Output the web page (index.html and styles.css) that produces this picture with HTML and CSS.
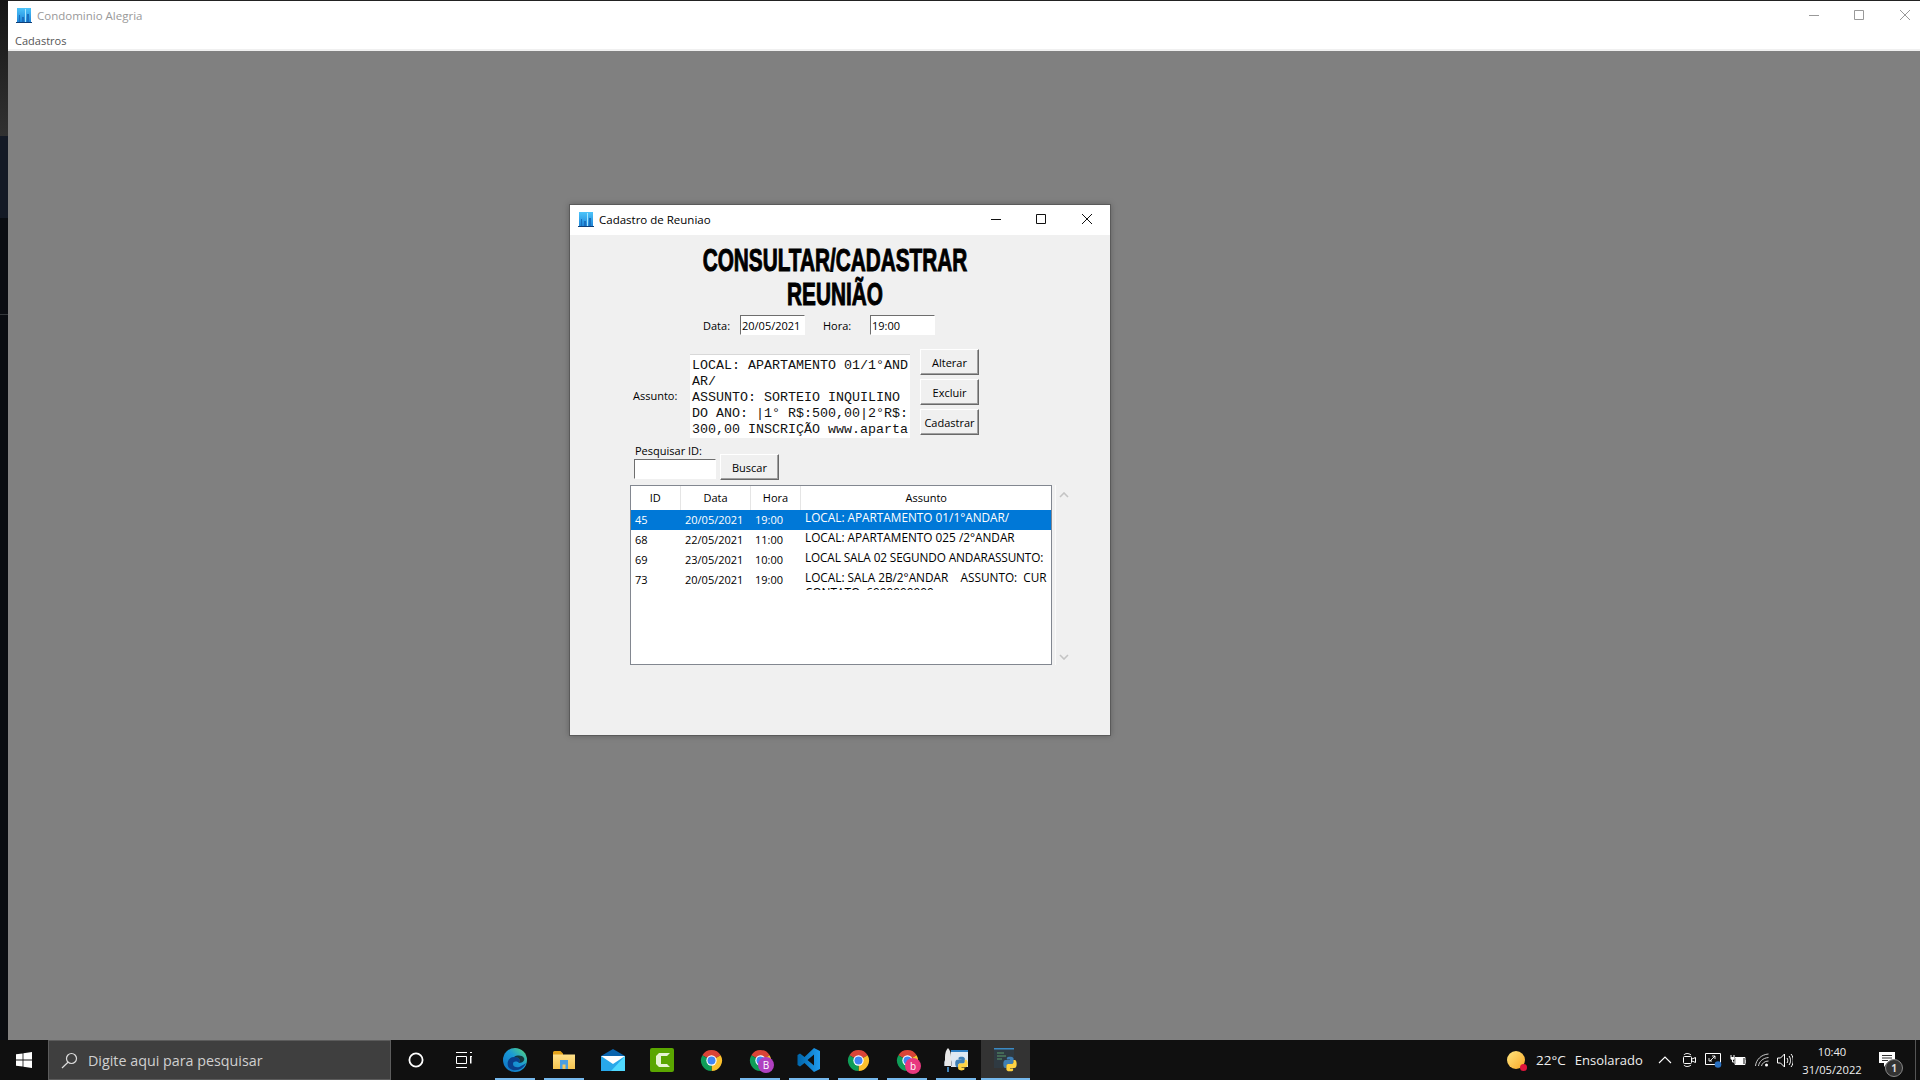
FILE: index.html
```html
<!DOCTYPE html>
<html lang="pt-BR">
<head>
  <meta charset="UTF-8">
  <title>Condominio Alegria</title>
  <link rel="stylesheet" href="styles.css">
</head>
<body>
  <svg class="defs" width="0" height="0">
    <defs>
      <linearGradient id="bldg-fill" x1="0" y1="0" x2="0" y2="1"><stop offset="0" stop-color="#4cc4fa"/><stop offset="1" stop-color="#1f86d8"/></linearGradient>
      <linearGradient id="edge-fill" x1="0" y1="1" x2="1" y2="0"><stop offset="0" stop-color="#0d6fc4"/><stop offset=".55" stop-color="#1a9ad6"/><stop offset="1" stop-color="#5bdc72"/></linearGradient>
      <linearGradient id="folder-fill" x1="0" y1="0" x2="0" y2="1"><stop offset="0" stop-color="#ffe08a"/><stop offset="1" stop-color="#f5c34e"/></linearGradient>
      <linearGradient id="vs-fill" x1="0" y1="0" x2="1" y2="0"><stop offset="0" stop-color="#0065a9"/><stop offset="1" stop-color="#1f9cf0"/></linearGradient>
      <symbol id="bldg" viewBox="0 0 16 16">
        <path fill="url(#bldg-fill)" d="M1 1h14v14H1z"/>
        <path fill="#1a6fbe" d="M3 8h1v7H3zM6 10h2v5H6zM11 7h2v8h-2z"/>
        <path fill="#a8e6ff" d="M9 2h1v13H9z"/>
        <path fill="#0e3f78" d="M0 15h16v1H0z"/>
      </symbol>
      <symbol id="chrome" viewBox="0 0 24 24">
        <path fill="#db4437" d="M12 12L2.47 6.5A11 11 0 0 1 21.53 6.5z"/>
        <path fill="#fbc02d" d="M12 12l9.53-5.5A11 11 0 0 1 12 23z"/>
        <path fill="#0f9d58" d="M12 12v11A11 11 0 0 1 2.47 6.5z"/>
        <circle cx="12" cy="12" r="5.4" fill="#fff"/>
        <circle cx="12" cy="12" r="4.2" fill="#4285f4"/>
      </symbol>
      <symbol id="python" viewBox="0 0 24 24">
        <path fill="#3f7fb5" d="M11.9 1C7 1 7.3 3.1 7.3 3.1v2.3H12V6H5.4S2 5.7 2 11.9c0 6.2 3 6 3 6h1.8v-2.9s-.1-3 2.9-3h4.9s2.8 0 2.8-2.7V3.9S17.1 1 11.9 1z"/>
        <path fill="#ffd343" d="M12.1 23c4.9 0 4.6-2.1 4.6-2.1v-2.3H12V18h6.6s3.4.3 3.4-5.9c0-6.2-3-6-3-6h-1.8V9s.1 3-2.9 3H9.4s-2.8 0-2.8 2.7v5.4S6.9 23 12.1 23z"/>
      </symbol>
    </defs>
  </svg>

  <div class="screen">
    <div class="edge-strip">
      <div class="strip-a"></div>
      <div class="strip-b"></div>
      <div class="strip-c"></div>
      <div class="strip-d"></div>
    </div>

    <div class="main-win">
      <div class="titlebar main-title">
        <svg class="app-icon"><use href="#bldg"/></svg>
        <span class="win-title">Condominio Alegria</span>
        <div class="win-btns">
          <svg width="10" height="10" viewBox="0 0 10 10"><path d="M0 5.5h10" stroke="#999"/></svg>
          <svg width="10" height="10" viewBox="0 0 10 10"><path d="M.5.5h9v9h-9z" fill="none" stroke="#999"/></svg>
          <svg width="10" height="10" viewBox="0 0 10 10"><path d="M0 0l10 10M10 0L0 10" stroke="#999"/></svg>
        </div>
      </div>
      <div class="menubar"><span>Cadastros</span></div>

      <div class="mdi">
        <div class="dialog">
          <div class="titlebar dlg-title">
            <svg class="app-icon"><use href="#bldg"/></svg>
            <span class="win-title">Cadastro de Reuniao</span>
            <div class="win-btns">
              <svg width="10" height="10" viewBox="0 0 10 10"><path d="M0 5.5h10" stroke="#111"/></svg>
              <svg width="10" height="10" viewBox="0 0 10 10"><path d="M.5.5h9v9h-9z" fill="none" stroke="#111"/></svg>
              <svg width="10" height="10" viewBox="0 0 10 10"><path d="M0 0l10 10M10 0L0 10" stroke="#111"/></svg>
            </div>
          </div>

          <div class="dlg-body">
            <h1 class="heading"><span>CONSULTAR/CADASTRAR</span><span>REUNIÃO</span></h1>

            <div class="row-when">
              <label class="lbl-data">Data:</label>
              <input class="field" type="text" value="20/05/2021">
              <label class="lbl-hora">Hora:</label>
              <input class="field" type="text" value="19:00">
            </div>

            <div class="row-subject">
              <label class="lbl-subject">Assunto:</label>
              <textarea class="memo" readonly>LOCAL: APARTAMENTO 01/1°AND
AR/
ASSUNTO: SORTEIO INQUILINO
DO ANO: |1° R$:500,00|2°R$:
300,00 INSCRIÇÃO www.aparta</textarea>
              <div class="actions">
                <button class="btn">Alterar</button>
                <button class="btn">Excluir</button>
                <button class="btn">Cadastrar</button>
              </div>
            </div>

            <div class="row-search">
              <div class="search-col">
                <label class="lbl-search">Pesquisar ID:</label>
                <input class="field field-id" type="text">
              </div>
              <button class="btn">Buscar</button>
            </div>

            <div class="row-list">
              <div class="list">
                <table>
                  <colgroup><col class="c-id"><col class="c-data"><col class="c-hora"><col></colgroup>
                  <thead><tr><th>ID</th><th>Data</th><th>Hora</th><th>Assunto</th></tr></thead>
                  <tbody>
                    <tr class="sel"><td>45</td><td>20/05/2021</td><td>19:00</td><td><div class="subj">LOCAL: APARTAMENTO 01/1°ANDAR/</div></td></tr>
                    <tr><td>68</td><td>22/05/2021</td><td>11:00</td><td><div class="subj">LOCAL: APARTAMENTO 025 /2°ANDAR</div></td></tr>
                    <tr><td>69</td><td>23/05/2021</td><td>10:00</td><td><div class="subj tight">LOCAL SALA 02 SEGUNDO ANDARASSUNTO:</div></td></tr>
                    <tr><td>73</td><td>20/05/2021</td><td>19:00</td><td><div class="subj">LOCAL: SALA 2B/2°ANDAR    ASSUNTO:  CUR<br>CONTATO: 6999999999</div></td></tr>
                  </tbody>
                </table>
              </div>
              <div class="scroll">
                <svg width="10" height="6" viewBox="0 0 10 6"><path d="M1 5l4-4 4 4" fill="none" stroke="#c4c4c4" stroke-width="1.6"/></svg>
                <svg width="10" height="6" viewBox="0 0 10 6"><path d="M1 1l4 4 4-4" fill="none" stroke="#c4c4c4" stroke-width="1.6"/></svg>
              </div>
            </div>
          </div>
        </div>
      </div>
    </div>
  </div>

  <div class="taskbar">
    <div class="tb-start">
      <svg width="16" height="16" viewBox="0 0 16 16"><path fill="#fff" d="M0 2.3l6.6-.9v6.2H0zM7.400 1.300L16 0v7.600H7.400zM0 8.400h6.600v6.200L0 13.700zM7.400 8.400H16V16l-8.600-1.300z"/></svg>
    </div>
    <div class="tb-search">
      <svg width="17" height="17" viewBox="0 0 17 17"><circle cx="10.5" cy="6.5" r="5" fill="none" stroke="#ddd" stroke-width="1.2"/><path d="M7 10.2L1 16" stroke="#ddd" stroke-width="1.2"/></svg>
      <span>Digite aqui para pesquisar</span>
    </div>
    <div class="tb-tool first">
      <svg width="16" height="16" viewBox="0 0 16 16"><circle cx="8" cy="8" r="6.6" fill="none" stroke="#fff" stroke-width="1.8"/></svg>
    </div>
    <div class="tb-tool">
      <svg width="16" height="16" viewBox="0 0 16 16" fill="none" stroke="#fff"><path d="M0 .5h11M0 15.5h11M.5 4.500h10v7H.5zM14 .5h2M14 4.500h2v7"/><path d="M14.500 4.500v7"/></svg>
    </div>

    <div class="tb-apps">
      <div class="app on">
        <svg width="24" height="24" viewBox="0 0 24 24"><circle cx="12" cy="12" r="12" fill="url(#edge-fill)"/><path fill="#0a3f8c" d="M23 15c-2 6-11 10-17 5C3 16 5 9 11 9c5 0 7 3 5 6-2-2-6-2-6 1 0 4 6 4 8 2 2-1 4-2 5-3z"/><path fill="#101010" d="M16 15c2-3 0-6-5-6 3-2 8-2 10 1 1 2-1 5-5 5z" opacity=".75"/></svg>
      </div>
      <div class="app on">
        <svg width="22" height="18" viewBox="0 0 22 18"><path fill="#e3a21a" d="M0 1.500A1.500 1.500 0 0 1 1.500 0h6L10 2.500V5H0z"/><path fill="url(#folder-fill)" d="M0 3.500h22V18H0z"/><path fill="#4a9ee0" d="M7 9h8v9h-2.500v-4.500h-3V18H7z"/></svg>
      </div>
      <div class="app">
        <svg width="24" height="22" viewBox="0 0 24 22"><path fill="#0a64ad" d="M12 0l12 7-12 8L0 7z"/><path fill="#28a8ea" d="M0 7h24v15H0z"/><path fill="#50d9ff" d="M24 7v15H10z"/><path fill="#fff" d="M0 7h24l-12 8z"/></svg>
      </div>
      <div class="app">
        <svg width="24" height="24" viewBox="0 0 24 24"><rect width="24" height="24" rx="2" fill="#5aa600"/><path fill="#e6f4d2" d="M20 5H9L6 8v8l3 3h11l-3-3h-6V8h6z"/></svg>
      </div>
      <div class="app">
        <svg width="23" height="23"><use href="#chrome"/></svg>
      </div>
      <div class="app on">
        <svg width="23" height="23"><use href="#chrome"/></svg>
        <span class="badge b-purple">B</span>
      </div>
      <div class="app on">
        <svg width="24" height="24" viewBox="0 0 24 24"><path fill="url(#vs-fill)" fill-rule="evenodd" d="M17 0l6 3v18l-6 3-9.500-9L3 18.500l-2.500-1.500v-10L3 5.500 7.500 9zM17 6.500L10.500 12l6.500 5.500z"/></svg>
      </div>
      <div class="app on">
        <svg width="23" height="23"><use href="#chrome"/></svg>
      </div>
      <div class="app on">
        <svg width="23" height="23"><use href="#chrome"/></svg>
        <span class="badge b-pink">b</span>
      </div>
      <div class="app on">
        <svg width="25" height="26" viewBox="0 0 25 26"><rect x="7" y="3" width="17" height="17" fill="#dfe8f2"/><path fill="#2e7fc4" d="M7 3h17v2H7z"/><path fill="#e8e8e8" d="M4 1c2 2 3 5 3 9v9H1v-9c0-4 1-7 3-9z"/><path fill="#9aa4ae" d="M0 15l1-2v6H0zM8 15l-1-2v6h1z"/><path fill="#3f7fb5" d="M3 20h2v5H3z"/><use href="#python" x="10" y="9" width="15" height="15"/></svg>
      </div>
      <div class="app on cur">
        <svg class="py-ico" width="24" height="24" viewBox="0 0 24 24"><rect width="20" height="20" fill="#2f3a42"/><path fill="#3b8ac4" d="M0 0h20v1.500H0z"/><path stroke="#5a9a6a" d="M3 5h7M3 8h9M3 11h5"/><use href="#python" x="8" y="8" width="16" height="16"/></svg>
      </div>
    </div>

    <div class="tb-tray">
      <div class="weather">
        <span class="sun"><span class="sun-dot"></span></span>
        <span class="temp">22°C</span>
        <span class="sky">Ensolarado</span>
      </div>
      <div class="tray-ico s-24"><svg width="14" height="8" viewBox="0 0 14 8"><path d="M1 7l6-6 6 6" fill="none" stroke="#fff" stroke-width="1.1"/></svg></div>
      <div class="tray-ico s-24"><svg width="13" height="16" viewBox="0 0 13 16" fill="none" stroke="#fff"><path d="M1 3c1-2 5-2 7 0M1 13c1 2 5 2 7 0"/><rect x=".5" y="4.500" width="8" height="7" rx="1"/><path d="M9 7l3.500-1.500v5L9 9"/></svg></div>
      <div class="tray-ico s-24"><svg width="17" height="16" viewBox="0 0 17 16" fill="none" stroke="#fff"><path d="M.5 1.500h15v11H.5z"/><path d="M5 9l5-5M7 4h3v3M4 6v3h3" stroke-width=".9"/><circle cx="13" cy="12.500" r="3.300" fill="#2a70c0" stroke="none"/></svg></div>
      <div class="tray-ico s-25"><svg width="16" height="14" viewBox="0 0 16 14" fill="#fff"><path d="M1 2v2M4 2v2" stroke="#fff"/><path d="M.5 4h4v2l-2 1.500L.5 6z"/><path d="M2.500 7v2h2" fill="none" stroke="#fff"/><path d="M5 4.500h10v7H5z" fill="none" stroke="#fff"/><path d="M5.500 5h8v6h-8z"/><path d="M15.500 7h.5v3h-.5z"/></svg></div>
      <div class="tray-ico s-25"><svg width="15" height="14" viewBox="0 0 15 14" fill="none" stroke="#ccc"><path d="M.5 13C1 7 6 1.500 13.500 1"/><path d="M3.500 13c.5-4 4-8 10-8.500"/><path d="M6.500 13c.5-2.500 3-5 7-5"/><circle cx="11.500" cy="12" r="1.500" fill="#fff" stroke="none"/></svg></div>
      <div class="tray-ico s-22 vol"><svg width="16" height="15" viewBox="0 0 16 15" fill="none" stroke="#fff"><path d="M.5 5h3l4-4v13l-4-4h-3z"/><path d="M10 5c1 1.500 1 3.500 0 5M12 3c2 2.500 2 6.500 0 9M14 1c3 3.500 3 9.500 0 13"/></svg></div>
      <div class="clock"><span>10:40</span><span>31/05/2022</span></div>
      <div class="notif">
        <svg width="16" height="16" viewBox="0 0 16 16"><path fill="#fff" d="M0 0h16v11H8l-3 4v-4H0z"/><path d="M3 3.500h10M3 6h10M3 8.500h6" stroke="#333"/></svg>
        <span class="notif-count">1</span>
      </div>
      <div class="show-desk"></div>
    </div>
  </div>
</body>
</html>
```

FILE: styles.css
```css
html, body { margin: 0; padding: 0; }
body {
  width: 1920px; height: 1080px; overflow: hidden;
  display: flex; flex-direction: column;
  font-family: "Open Sans", "Liberation Sans", sans-serif;
  font-size: 11px; color: #000; background: #0a0d12;
}
.defs { position: absolute; }

.screen { display: flex; height: 1040px; }

.edge-strip { width: 8px; display: flex; flex-direction: column; }
.strip-a { height: 136px; background: linear-gradient(#141414, #1e1e1e 30%, #313131); }
.strip-b { height: 82px; background: #141a26; }
.strip-c { height: 96px; background: #0a0d12; border-bottom: 1px solid #33373b; }
.strip-d { flex: 1; background: #090c11; }

.main-win { flex: 1; display: flex; flex-direction: column; border-top: 1px solid #222; }

.titlebar { display: flex; align-items: center; background: #fff; }
.app-icon { width: 16px; height: 16px; }
.win-title { font-size: 11.5px; }
.win-btns { margin-left: auto; display: flex; }
.win-btns svg { display: block; }
.win-btns svg:last-child { margin-left: 1px; }

.main-title { height: 28px; padding: 0 0 1px 8px; }
.main-title .win-title { margin-left: 5px; color: #999; }
.main-title .win-btns { gap: 35px; padding-right: 10px; }

.menubar { height: 19px; padding-left: 7px; background: #fff; line-height: 22px; color: #555; border-bottom: 2px solid #f0f0f0; }

.mdi { flex: 1; position: relative; background: #808080; }

.dialog {
  position: absolute; left: 561px; top: 153px;
  width: 540px; height: 530px;
  background: #f0f0f0; border: 1px solid #5a5a5a;
  box-shadow: 0 0 6px rgba(0,0,0,0.25);
}
.dlg-title { height: 28px; padding: 0 0 2px 8px; }
.dlg-title .win-title { margin-left: 5px; }
.dlg-title .win-btns { gap: 35px; padding-right: 18px; }

.dlg-body { display: flex; flex-direction: column; }

.heading { margin: 9px 10px 0 0; font: bold 31px/34px "Liberation Sans", sans-serif; text-align: center; color: #000; }
.heading span { display: block; transform: scaleX(.67); white-space: nowrap; -webkit-text-stroke: 1px #000; }

label { display: block; }
.field {
  box-sizing: border-box; width: 65px; height: 20px;
  margin: 0; padding: 0 1px;
  font: inherit; color: #000; background: #fff;
  border: 1px solid; border-color: #6e6e6e #fff #fff #6e6e6e;
  outline: none;
}

.row-when { display: flex; align-items: center; margin-top: 3px; padding-left: 133px; }
.lbl-data { width: 37px; }
.lbl-hora { width: 47px; margin-left: 18px; }

.row-subject { display: flex; margin-top: 14px; padding-left: 63px; }
.lbl-subject { width: 57px; margin-top: 39px; }
.memo {
  box-sizing: border-box; width: 220px; height: 84px;
  margin: 5px 0 0; padding: 3px 2px 0; border: 0; border-top: 1px solid #d8d8d8;
  font: 13.33px/16px "Liberation Mono", monospace; color: #111;
  background: #fff; white-space: pre; overflow: hidden; resize: none; outline: none;
}
.actions { display: flex; flex-direction: column; gap: 4px; margin-left: 10px; }
.btn {
  box-sizing: border-box; width: 59px; height: 26px;
  margin: 0; padding: 0;
  font: inherit; color: #000; background: #f0f0f0;
  border: 1px solid; border-color: #fff #696969 #696969 #fff;
  box-shadow: inset -1px -1px 0 #a0a0a0;
}

.row-search { display: flex; margin-top: 5px; padding-left: 64px; }
.search-col { margin-bottom: 1px; }
.lbl-search { height: 16px; line-height: 15px; padding-left: 1px; }
.field-id { width: 82px; }
.row-search .btn { align-self: flex-end; margin-left: 4px; }

.row-list { display: flex; margin-top: 5px; padding-left: 60px; }
.list { box-sizing: border-box; width: 422px; height: 180px; background: #fff; border: 1px solid #828790; }
table { width: 420px; table-layout: fixed; border-collapse: collapse; }
.c-id { width: 49px; }
.c-data { width: 70px; }
.c-hora { width: 50px; }
th { height: 24px; padding: 0 0 2px; box-sizing: border-box; font-weight: normal; background: #fff; border-right: 1px solid #e5e5e5; }
th + th { padding-left: 1px; }
th:last-child { border-right: 0; }
td { height: 20px; padding: 0 0 0 4px; white-space: nowrap; overflow: hidden; line-height: 20px; }
td + td { padding-left: 5px; }
tr.sel td { background: #0078d7; color: #fff; }
.subj { height: 20px; margin-right: 4px; font-size: 11.8px; line-height: 15px; white-space: pre; overflow: hidden; }
.tight { letter-spacing: -.13px; }

.scroll {
  box-sizing: border-box; width: 16px; height: 180px; margin-left: 3px;
  padding: 7px 0 5px; border-left: 1px solid #fafafa;
  display: flex; flex-direction: column; justify-content: space-between; align-items: center;
}

.taskbar { height: 40px; display: flex; background: #101010; color: #fff; }
.tb-start { width: 48px; display: flex; align-items: center; justify-content: center; }
.tb-search {
  box-sizing: border-box; width: 343px; display: flex; align-items: center; gap: 10px; padding-left: 12px;
  background: #3f3f3f; border: 1px solid #5c5c5c;
  font-size: 14.3px; color: #d0d0d0;
}
.tb-tool { width: 48px; display: flex; align-items: center; justify-content: center; }
.tb-tool.first { margin-left: 1px; }
.tb-apps { display: flex; margin-left: 2.5px; }
.app { width: 49px; position: relative; display: flex; align-items: center; justify-content: center; }
.app.on::after {
  content: ""; position: absolute; left: 4.5px; right: 4.5px; bottom: 0; height: 2px; background: #76b9ed;
}
.app.cur { background: #333; }
.app.cur::after { left: 0; right: 0; }
.py-ico { margin-left: 2px; }
.badge {
  position: absolute; left: 22.5px; top: 17px; width: 16px; height: 16px; border-radius: 50%;
  font-size: 10px; line-height: 16px; text-align: center; color: #fff;
}
.b-purple { background: #b040c0; }
.b-pink { background: #e8387f; top: 18px; }

.tb-tray { margin-left: auto; display: flex; align-items: center; height: 40px; }
.weather { display: flex; align-items: center; width: 146px; font-size: 13.5px; color: #eee; }
.sun {
  position: relative; width: 18px; height: 18px; border-radius: 50%;
  background: linear-gradient(135deg, #ffe680, #f9a825); margin-right: 11px;
}
.sun-dot { position: absolute; right: -2px; bottom: -2px; width: 7px; height: 7px; border-radius: 50%; background: #e0153c; }
.temp { margin-right: 9px; }
.sky { font-size: 13px; }
.tray-ico { display: flex; align-items: center; justify-content: center; }
.s-24 { width: 24px; }
.s-25 { width: 25px; }
.s-22 { width: 22px; }
.vol svg { margin-right: 2px; }
.clock { width: 70px; display: flex; flex-direction: column; align-items: center; gap: 1px; font-size: 11.2px; line-height: 17px; color: #eee; }
.notif { width: 40px; position: relative; display: flex; align-items: center; justify-content: center; height: 40px; }
.notif-count {
  position: absolute; left: 18px; top: 19px; width: 16px; height: 16px; border-radius: 50%;
  background: #333; border: 1px solid #888; font-size: 10px; font-weight: bold; line-height: 16px; text-align: center; color: #ddd;
}
.show-desk { width: 13px; height: 40px; position: relative; }
.show-desk::after { content: ""; position: absolute; left: 8px; top: 0; bottom: 0; width: 1px; background: #555; }
```
